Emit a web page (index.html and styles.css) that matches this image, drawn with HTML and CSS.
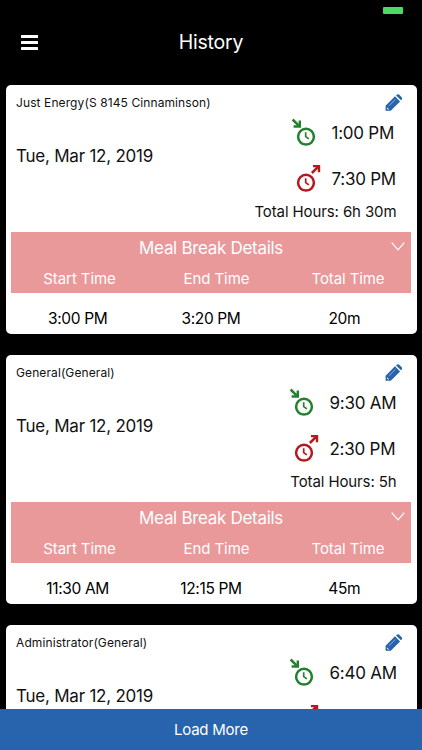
FILE: index.html
```
<!DOCTYPE html>
<html lang="en">
<head>
<meta charset="utf-8">
<title>History</title>
<link rel="stylesheet" href="styles.css">
</head>
<body>
<svg class="defs" aria-hidden="true">
  <symbol id="pencil" viewBox="0 0 18 18">
    <path fill="#2863ad" d="M.6 17.300V12L10.300 2.400L15.500 7.600L5.900 17.300ZM11.400 1.500L12.400.5Q13.400-.2 14.400.5L17.400 3.500Q18.100 4.500 17.400 5.500L16.400 6.500Z"/>
    <path fill="none" stroke="#b9cfe9" stroke-width=".7" d="M4 12.200L10.800 5.400"/>
    <path fill="#fff" d="M2 13.600L4.300 15.900H3.100L2 14.900Z"/>
  </symbol>
  <symbol id="clock-in" viewBox="0 0 28 28">
    <g fill="none" stroke="#24802e" stroke-width="2.500"><circle cx="15" cy="18.700" r="7.900"/><path d="M14.700 14.200V18.600L17.900 20.900" stroke-width="1.700"/><path d="M1.600 1.500L8 7.900" stroke-width="2.500"/></g>
    <path fill="#24802e" d="M10 2.500V9.700H2.600V7.300H5.800L7.600 5.500V2.500Z"/>
  </symbol>
  <symbol id="clock-out" viewBox="0 0 28 28">
    <g fill="none" stroke="#b5181e" stroke-width="2.500"><circle cx="10" cy="18.700" r="7.900"/><path d="M9.700 14.200V18.600L12.900 20.900" stroke-width="1.700"/><path d="M15.900 9L22.500 2.400" stroke-width="2.500"/></g>
    <path fill="#b5181e" d="M17 .9H24.200V8.200H21.800V5L20.200 3.300H17Z"/>
  </symbol>
</svg>
<div class="app">
  <header class="header">
    <div class="status"><span class="battery"></span></div>
    <div class="nav"><span class="menu"><i></i><i></i><i></i></span><h1>History</h1></div>
  </header>
  <main class="list">
    <article class="card">
      <div class="summary">
        <div class="left"><div class="job">Just Energy(S 8145 Cinnaminson)</div><div class="date">Tue, Mar 12, 2019</div></div>
        <div class="right">
          <svg class="pencil"><use href="#pencil"/></svg>
          <div class="punches">
            <svg class="in"><use href="#clock-in"/></svg><span class="time">1:00 PM</span>
            <svg class="out"><use href="#clock-out"/></svg><span class="time">7:30 PM</span>
          </div>
          <div class="total">Total Hours: 6h 30m</div>
        </div>
      </div>
      <div class="meal">
        <div class="meal-title">Meal Break Details<svg class="chevron" viewBox="0 0 14 9"><path d="M.7.7L7 7.800L13.300.7"/></svg></div>
        <div class="cols"><span>Start Time</span><span>End Time</span><span>Total Time</span></div>
      </div>
      <div class="cols values"><span>3:00 PM</span><span>3:20 PM</span><span>20m</span></div>
    </article>
    <article class="card wide">
      <div class="summary">
        <div class="left"><div class="job">General(General)</div><div class="date">Tue, Mar 12, 2019</div></div>
        <div class="right">
          <svg class="pencil"><use href="#pencil"/></svg>
          <div class="punches">
            <svg class="in"><use href="#clock-in"/></svg><span class="time">9:30 AM</span>
            <svg class="out"><use href="#clock-out"/></svg><span class="time">2:30 PM</span>
          </div>
          <div class="total">Total Hours: 5h</div>
        </div>
      </div>
      <div class="meal">
        <div class="meal-title">Meal Break Details<svg class="chevron" viewBox="0 0 14 9"><path d="M.7.7L7 7.800L13.300.7"/></svg></div>
        <div class="cols"><span>Start Time</span><span>End Time</span><span>Total Time</span></div>
      </div>
      <div class="cols values"><span>11:30 AM</span><span>12:15 PM</span><span>45m</span></div>
    </article>
    <article class="card wide">
      <div class="summary">
        <div class="left"><div class="job">Administrator(General)</div><div class="date">Tue, Mar 12, 2019</div></div>
        <div class="right">
          <svg class="pencil"><use href="#pencil"/></svg>
          <div class="punches">
            <svg class="in"><use href="#clock-in"/></svg><span class="time">6:40 AM</span>
            <svg class="out"><use href="#clock-out"/></svg><span class="time"></span>
          </div>
        </div>
      </div>
    </article>
  </main>
  <footer class="load">Load More</footer>
</div>
</body>
</html>
```
FILE: styles.css
```
* { box-sizing: border-box; }
body { margin: 0; background: #000; font-family: Inter, "Liberation Sans", sans-serif; color: #111; }
.defs { display: none; }
svg { display: block; }
.app { height: 750px; display: flex; flex-direction: column; overflow: hidden; background: #000; }
.header { flex: 0 0 84.500px; }
.status { height: 20px; padding: 7px 19px 0 0; display: flex; justify-content: flex-end; }
.battery { width: 20px; height: 7px; border-radius: 1px; background: #4cd964; }
.nav { height: 44px; display: grid; grid-template-columns: 60px 1fr 60px; align-items: center; }
.menu { display: flex; flex-direction: column; gap: 3px; padding-left: 21px; }
.menu i { width: 17px; height: 3px; background: #fff; border-radius: .5px; }
h1 { margin: 0; color: #fff; font-size: 19.500px; font-weight: 400; text-align: center; letter-spacing: -.2px; line-height: 24px; }
.list { flex: 1; min-height: 0; overflow: hidden; padding: 0 5.500px; }
.card { height: 249.500px; margin-bottom: 20.500px; padding: 0 5.500px; background: #fff; border-radius: 5px; }
.summary { height: 147.500px; display: flex; justify-content: space-between; padding-left: 5px; }
.job { margin-top: 10px; font-size: 12px; line-height: 16px; letter-spacing: .1px; white-space: nowrap; }
.date { margin-top: 33.500px; font-size: 17px; line-height: 24px; letter-spacing: -.230px; white-space: nowrap; }
.right { padding: 9px 14.500px 0 0; display: flex; flex-direction: column; align-items: flex-end; }
.pencil { width: 17.500px; height: 17.500px; margin: 0 -5.500px .5px 0; }
.punches { display: grid; grid-template-columns: 28px 64px; column-gap: 13px; grid-template-rows: 46px 46px; margin-top: 6.500px; }
.punches svg { width: 28px; height: 28px; margin-left: -1px; }
.punches .out { margin-left: 4px; }
.time { margin-left: -1px; font-size: 17px; line-height: 30px; letter-spacing: -.250px; white-space: nowrap; }
.wide .punches { grid-template-columns: 28px 66px; }
.total { font-size: 15px; line-height: 20px; margin-top: -8px; letter-spacing: -.110px; white-space: nowrap; }
.meal { height: 61px; color: #fff; background: #e9999a; }
.meal-title { position: relative; height: 31px; text-align: center; font-size: 17px; line-height: 32px; letter-spacing: -.310px; }
.chevron { position: absolute; right: 6px; top: 10px; width: 14px; height: 9px; fill: none; stroke: #fff; stroke-width: 1.200; }
.cols { display: grid; grid-template-columns: 137px 137px 1fr; text-align: center; font-size: 15px; line-height: 31px; letter-spacing: -.090px; }
.values { grid-template-columns: repeat(3, 1fr); padding-top: 10px; font-size: 15.500px; letter-spacing: -.350px; color: #000; }
.load { flex: 0 0 41px; background: #2863ad; color: #fff; text-align: center; font-size: 15px; line-height: 41px; letter-spacing: -.250px; }
```
